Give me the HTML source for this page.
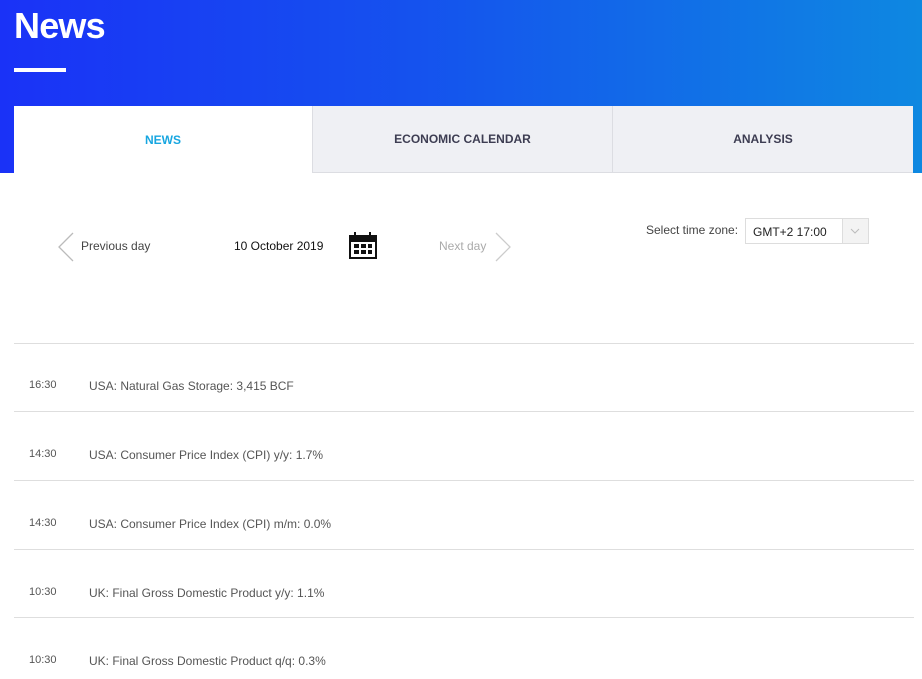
<!DOCTYPE html>
<html><head><style>
*{margin:0;padding:0;box-sizing:border-box}
body{width:922px;height:679px;overflow:hidden;background:#fff;font-family:"Liberation Sans",sans-serif;position:relative}
.hdr{position:absolute;left:0;top:0;width:922px;height:173px;background:linear-gradient(90deg,#1a32f7 0%,#1552ee 45%,#0e88e1 100%)}
h1{position:absolute;left:14px;top:5px;color:#fff;font-size:36px;font-weight:bold;letter-spacing:-0.8px}
.bar{position:absolute;left:14px;top:68px;width:52px;height:4px;background:#fff}
.tab{position:absolute;top:106px;height:67px;display:flex;align-items:center;justify-content:center;font-size:12px;font-weight:bold;color:#3d3d52;background:#eff0f4;border-bottom:1px solid #dcdde2}
.t{position:absolute;white-space:nowrap}
.line{position:absolute;left:14px;width:900px;height:1px;background:#dedede}
.tm{position:absolute;left:29px;font-size:11px;color:#555}
.nm{position:absolute;left:89px;font-size:12px;color:#555}
</style></head><body>
<div class="hdr"></div>
<h1>News</h1>
<div class="bar"></div>
<div class="tab" style="left:14px;width:298px;background:#fff;color:#17a6e0;border:none">NEWS</div>
<div class="tab" style="left:312px;width:300px;border-left:1px solid #dcdde2">ECONOMIC CALENDAR</div>
<div class="tab" style="left:612px;width:301px;border-left:1px solid #dcdde2">ANALYSIS</div>

<svg style="position:absolute;left:57px;top:232px" width="18" height="30"><path d="M16 1 L2 15 L16 29" fill="none" stroke="#bbb" stroke-width="1.3"/></svg>
<div class="t" style="left:81px;top:239px;font-size:12px;color:#444">Previous day</div>
<div class="t" style="left:234px;top:239px;font-size:12px;color:#111">10 October 2019</div>
<svg style="position:absolute;left:348px;top:231px" width="30" height="29"><rect x="1" y="4" width="28" height="24" fill="#111"/><rect x="3" y="11" width="24" height="15" fill="#fff"/><rect x="6" y="1" width="2" height="6" fill="#111"/><rect x="21" y="1" width="2" height="6" fill="#111"/><g fill="#111"><rect x="6" y="13" width="5" height="4"/><rect x="13" y="13" width="5" height="4"/><rect x="20" y="13" width="4" height="4"/><rect x="6" y="19" width="5" height="4"/><rect x="13" y="19" width="5" height="4"/><rect x="20" y="19" width="4" height="4"/></g></svg>
<div class="t" style="left:439px;top:239px;font-size:12px;color:#aaa">Next day</div>
<svg style="position:absolute;left:494px;top:232px" width="18" height="30"><path d="M2 1 L16 15 L2 29" fill="none" stroke="#ccc" stroke-width="1.3"/></svg>

<div class="t" style="left:646px;top:223px;font-size:12px;color:#444">Select time zone:</div>
<div style="position:absolute;left:745px;top:218px;width:124px;height:26px;border:1px solid #ddd;background:#fff"></div>
<div style="position:absolute;left:842px;top:219px;width:26px;height:24px;background:#f3f3f3;border-left:1px solid #ddd"></div>
<svg style="position:absolute;left:850px;top:227px" width="10" height="8"><path d="M1 2 L5 6 L9 2" fill="none" stroke="#bbb"/></svg>
<div class="t" style="left:753px;top:225px;font-size:12px;color:#222">GMT+2 17:00</div>

<div class="line" style="top:343px"></div>
<div class="tm" style="top:379px">16:30</div><div class="nm" style="top:379px">USA: Natural Gas Storage: 3,415 BCF</div>
<div class="line" style="top:411px"></div>
<div class="tm" style="top:448px">14:30</div><div class="nm" style="top:448px">USA: Consumer Price Index (CPI) y/y: 1.7%</div>
<div class="line" style="top:480px"></div>
<div class="tm" style="top:517px">14:30</div><div class="nm" style="top:517px">USA: Consumer Price Index (CPI) m/m: 0.0%</div>
<div class="line" style="top:549px"></div>
<div class="tm" style="top:586px">10:30</div><div class="nm" style="top:586px">UK: Final Gross Domestic Product y/y: 1.1%</div>
<div class="line" style="top:617px"></div>
<div class="tm" style="top:654px">10:30</div><div class="nm" style="top:654px">UK: Final Gross Domestic Product q/q: 0.3%</div>
</body></html>
